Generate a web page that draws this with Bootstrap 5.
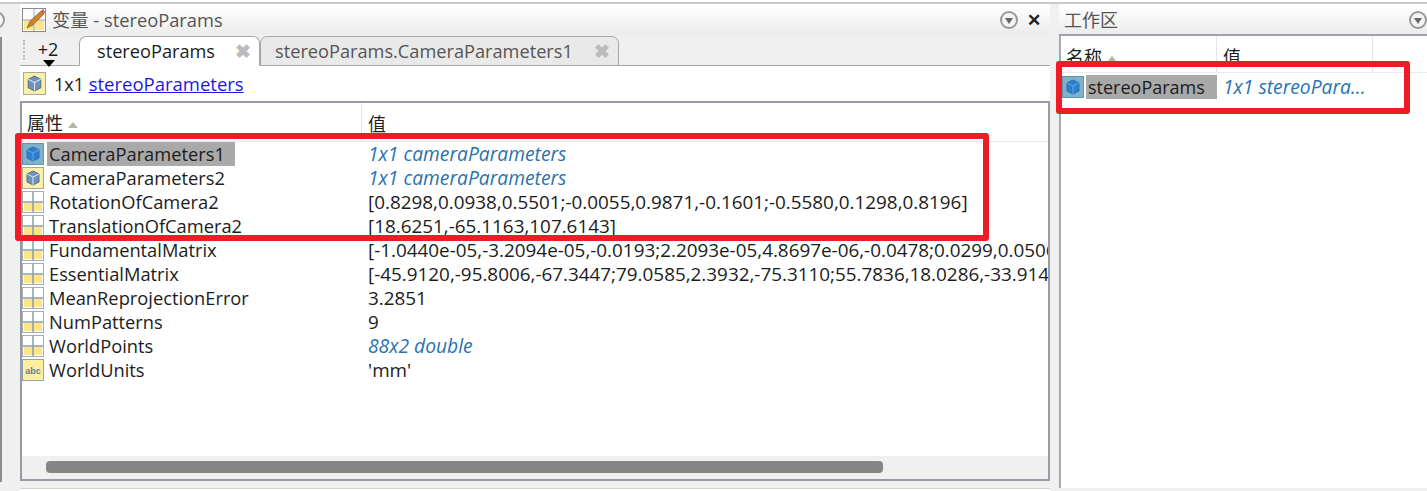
<!DOCTYPE html>
<html lang="zh">
<head>
    <meta charset="UTF-8">
    <meta name="viewport" content="width=device-width, initial-scale=1.0">
    <title>变量 - stereoParams</title>
    <link href="https://cdn.jsdelivr.net/npm/bootstrap@5.3.0/dist/css/bootstrap.min.css" rel="stylesheet">
    <style>
        html, body { height: 491px; overflow: hidden; }
        body { background: #f0f0f0; color: #1c1c1c; font: 18px/24px "Open Sans", "Noto Sans CJK SC", sans-serif; position: relative; }
        .app-top { height: 4px; background: #fff; border-bottom: 2px solid #c9c9c9; }
        .app-main { height: 484px; }
        .left-strip { width: 20px; background: #f0f0f0; }
        .left-edge { width: 2px; height: 445px; background: #8c8c8c; }
        .round-btn { width: 18px; height: 18px; border: 2px solid #9a9a9a; border-radius: 50%; background: #f4f4f4; flex: none; position: relative; }
        .round-btn::after { content: ""; position: absolute; left: 3px; top: 5px; border: 4px solid transparent; border-top: 6px solid #666; border-bottom: 0; }
        .left-strip .round-btn { margin-left: -13px; margin-top: 7px; }
        .var-panel { width: 1030px; }
        .ws-panel { margin-left: 9px; width: 368px; border-left: 2px solid #a8a8b0; background: #fff; }
        .title-bar { height: 31px; padding-left: 2px; background: linear-gradient(#fff, #ececec); color: #555; font-size: 17px; }
        .title-text { font-size: 18.3px; margin-left: -2px; }
        .ws-panel .title-bar { height: 32px; padding: 2px 0 0 5px; border-bottom: 2px solid #a0a0a8; margin-left: -2px; }
        .ws-panel .title-text { margin-left: 0; font-size: 18px; }
        .close-x { font-size: 17px; font-weight: 700; color: #222; margin: 0 9px 0 9px; line-height: 1; }
        .tab-strip { height: 31px; background: #f0f0f0; border-bottom: 1px solid #a6a6a6; }
        .grip { width: 3px; height: 20px; margin-left: 3px; border-left: 2px dotted #bbb; }
        .more-tabs { width: 54px; padding-right: 10px; text-align: center; font-size: 18px; position: relative; line-height: 26px; margin-top: -3px; }
        .more-tabs::after { content: ""; position: absolute; left: 17px; top: 24px; border: 6px solid transparent; border-top: 7px solid #000; border-bottom: 0; }
        .tab-item { height: 30px; border: 1px solid #a6a6a6; border-radius: 7px 7px 0 0; background: #e9e9e9; color: #555; white-space: nowrap; margin-bottom: -1px; font-size: 18.2px; }
        .tab-one { padding: 0 10px 0 17px; gap: 20px; margin-left: -1px; }
        .tab-two { padding: 0 10px 0 14px; gap: 21px; }
        .tab-item.is-on { background: #fff; border-bottom-color: #fff; color: #1c1c1c; }
        .tab-x { color: #bbb; font-weight: 700; font-size: 19px; line-height: 1; width: 14px; display: block; }
        .info-line { height: 35px; background: #fff; padding-left: 3px; gap: 8px; }
        .info-line a { color: #1a1ae0; font-size: 18.5px; }
        .var-box { height: 380px; border: 2px solid #9a9aa6; background: #fff; position: relative; }
        .head-row { height: 39px; border-bottom: 1px solid #e8e8e8; background: #fff; }
        .head-cell { padding: 8px 0 0 5px; line-height: 24px; border-right: 1px solid #e4e4e4; white-space: nowrap; }
        .head-val { padding-left: 6px; padding-top: 9px; }
        .sort-up { display: inline-block; margin-left: 5px; border: 5px solid transparent; border-bottom: 6px solid #b5b5a5; border-top: 0; vertical-align: 2px; }
        .name-col { width: 340px; }
        .row-list { flex: 1; overflow: hidden; }
        .var-row { height: 24px; white-space: nowrap; align-items: center; }
        .var-row .name-col { display: flex; align-items: center; flex: none; }
        .var-row svg { flex: none; }
        .var-name { margin-left: 3px; padding: 0 10px 0 2px; font-size: 18.3px; }
        .var-name.is-sel { background: #a9a9a9; }
        .var-val { padding-left: 6px; font-size: 18.87px; }
        .var-val.is-link { color: #2a72ad; font-style: italic; font-size: 19.25px; }
        .scroll-track { height: 23px; background: #f0f0f0; padding: 5px 0 0 24px; }
        .scroll-thumb { width: 837px; height: 12px; background: #868686; border-radius: 4px; }
        .bottom-panel { height: 3px; margin-left: 20px; width: 1030px; background: #fff; border-top: 1px solid #d4d4d4; }
        .ws-head { height: 37px; border-bottom: 1px solid #ececec; }
        .ws-head .head-cell { padding-top: 9px; }
        .ws-name { width: 156px; }
        .ws-val { width: 156px; padding-left: 6px !important; }
        .ws-row { height: 24px; margin-top: 2px; white-space: nowrap; padding-left: 1px; }
        .ws-row .var-name { margin-left: 2px; width: 131px; padding: 0 0 0 2px; font-size: 18px; }
        .ws-row .var-val { padding-left: 6px; }
        .red-mark { position: absolute; border: 6px solid #ee1c25; border-radius: 3px; pointer-events: none; }
        .red-a { left: 15px; top: 133px; width: 974px; height: 108px; }
        .red-b { left: 1056px; top: 61px; width: 354px; height: 53px; }
    </style>
</head>
<body>
    <svg width="0" height="0" class="d-block">
        <defs>
            <symbol id="ic-cube" viewBox="0 0 22 22">
                <rect x=".5" y=".5" width="21" height="21" fill="#fdf0a8" stroke="#a9a9a0"/>
                <path d="M11 4l6 3v8l-6 3-6-3V7z" fill="#6f93bd" stroke="#5a6f8a"/>
                <path d="M5 7l6 3 6-3M11 10v8" fill="none" stroke="#dfe8f2"/>
            </symbol>
            <symbol id="ic-cube-sel" viewBox="0 0 22 22">
                <rect x=".5" y=".5" width="21" height="21" fill="#7fb2c9" stroke="#5d96b4"/>
                <path d="M11 4l6 3v8l-6 3-6-3V7z" fill="#2b7fd0" stroke="#2a6fb5"/>
                <path d="M5 7l6 3 6-3M11 10v8" fill="none" stroke="#69a8e0"/>
            </symbol>
            <symbol id="ic-grid" viewBox="0 0 22 22">
                <rect x=".5" y=".5" width="21" height="21" fill="#fff" stroke="#a4adb8"/>
                <rect x="2" y="12" width="18" height="8" fill="#fde68a"/>
                <path d="M11 1v20M1 11h20" stroke="#8b9cb0" stroke-width="1.5"/>
            </symbol>
            <symbol id="ic-abc" viewBox="0 0 22 22">
                <rect x=".5" y=".5" width="21" height="21" fill="#fdeea0" stroke="#8fa3b8"/>
                <text x="11" y="15" text-anchor="middle" font-family="Liberation Sans, sans-serif" font-size="9" font-weight="700" fill="#5f7f9a">abc</text>
            </symbol>
        </defs>
    </svg>

    <div class="app-top"></div>
    <div class="app-main d-flex">
        <div class="left-strip d-flex flex-column">
            <div class="round-btn"></div>
            <div class="left-edge mt-2"></div>
        </div>

        <div class="var-panel d-flex flex-column">
            <div class="title-bar d-flex align-items-center">
                <svg width="24" height="24" viewBox="0 0 24 24" class="me-2">
                    <rect x=".5" y=".5" width="23" height="23" fill="#fff" stroke="#8a8a8a"/>
                    <rect x="2" y="12" width="10" height="10" fill="#fde68a"/>
                    <rect x="13" y="12" width="9" height="10" fill="#fde68a"/>
                    <path d="M12 1v22M1 12h22" stroke="#9aa7b5"/>
                    <path d="M5 20l3-7L19 3l3 3-11 11z" fill="#c9822e" stroke="#7a5520" stroke-width=".6"/>
                    <path d="M19 3l3 3 1-2-2-3z" fill="#e0526a"/>
                </svg>
                <span class="title-text">变量 - stereoParams</span>
                <div class="round-btn ms-auto"></div>
                <span class="close-x">✕</span>
            </div>
            <div class="tab-strip d-flex align-items-end">
                <div class="grip align-self-center"></div>
                <div class="more-tabs align-self-center">+2</div>
                <div class="tab-item tab-one is-on d-flex align-items-center">stereoParams <span class="tab-x">✖</span></div>
                <div class="tab-item tab-two d-flex align-items-center">stereoParams.CameraParameters1 <span class="tab-x">✖</span></div>
            </div>
            <div class="info-line d-flex align-items-center">
                <svg width="23" height="23"><use href="#ic-cube"/></svg>
                <span>1x1 <a href="#">stereoParameters</a></span>
            </div>
            <div class="var-box d-flex flex-column">
                <div class="head-row d-flex">
                    <div class="head-cell name-col">属性<span class="sort-up"></span></div>
                    <div class="head-cell head-val flex-grow-1 border-0">值</div>
                </div>
                <div class="row-list">
                    <div class="var-row d-flex"><div class="name-col"><svg width="22" height="22"><use href="#ic-cube-sel"/></svg><span class="var-name is-sel">CameraParameters1</span></div><div class="var-val is-link">1x1 cameraParameters</div></div>
                    <div class="var-row d-flex"><div class="name-col"><svg width="22" height="22"><use href="#ic-cube"/></svg><span class="var-name">CameraParameters2</span></div><div class="var-val is-link">1x1 cameraParameters</div></div>
                    <div class="var-row d-flex"><div class="name-col"><svg width="22" height="22"><use href="#ic-grid"/></svg><span class="var-name">RotationOfCamera2</span></div><div class="var-val">[0.8298,0.0938,0.5501;-0.0055,0.9871,-0.1601;-0.5580,0.1298,0.8196]</div></div>
                    <div class="var-row d-flex"><div class="name-col"><svg width="22" height="22"><use href="#ic-grid"/></svg><span class="var-name">TranslationOfCamera2</span></div><div class="var-val">[18.6251,-65.1163,107.6143]</div></div>
                    <div class="var-row d-flex"><div class="name-col"><svg width="22" height="22"><use href="#ic-grid"/></svg><span class="var-name">FundamentalMatrix</span></div><div class="var-val">[-1.0440e-05,-3.2094e-05,-0.0193;2.2093e-05,4.8697e-06,-0.0478;0.0299,0.0506,1]</div></div>
                    <div class="var-row d-flex"><div class="name-col"><svg width="22" height="22"><use href="#ic-grid"/></svg><span class="var-name">EssentialMatrix</span></div><div class="var-val">[-45.9120,-95.8006,-67.3447;79.0585,2.3932,-75.3110;55.7836,18.0286,-33.9141]</div></div>
                    <div class="var-row d-flex"><div class="name-col"><svg width="22" height="22"><use href="#ic-grid"/></svg><span class="var-name">MeanReprojectionError</span></div><div class="var-val">3.2851</div></div>
                    <div class="var-row d-flex"><div class="name-col"><svg width="22" height="22"><use href="#ic-grid"/></svg><span class="var-name">NumPatterns</span></div><div class="var-val">9</div></div>
                    <div class="var-row d-flex"><div class="name-col"><svg width="22" height="22"><use href="#ic-grid"/></svg><span class="var-name">WorldPoints</span></div><div class="var-val is-link">88x2 double</div></div>
                    <div class="var-row d-flex"><div class="name-col"><svg width="22" height="22"><use href="#ic-abc"/></svg><span class="var-name">WorldUnits</span></div><div class="var-val">'mm'</div></div>
                </div>
                <div class="scroll-track"><div class="scroll-thumb"></div></div>
            </div>
        </div>

        <div class="ws-panel d-flex flex-column flex-grow-1">
            <div class="title-bar d-flex align-items-center">
                <span class="title-text">工作区</span>
                <div class="round-btn ms-auto"></div>
            </div>
            <div class="ws-head d-flex">
                <div class="head-cell ws-name">名称<span class="sort-up"></span></div>
                <div class="head-cell ws-val">值</div>
            </div>
            <div class="ws-row d-flex align-items-center">
                <svg width="22" height="22"><use href="#ic-cube-sel"/></svg>
                <span class="var-name is-sel">stereoParams</span>
                <span class="var-val is-link">1x1 stereoPara...</span>
            </div>
        </div>
    </div>
    <div class="bottom-panel"></div>

    <div class="red-mark red-a"></div>
    <div class="red-mark red-b"></div>

    <script src="https://cdn.jsdelivr.net/npm/bootstrap@5.3.0/dist/js/bootstrap.bundle.min.js"></script>
</body>
</html>
